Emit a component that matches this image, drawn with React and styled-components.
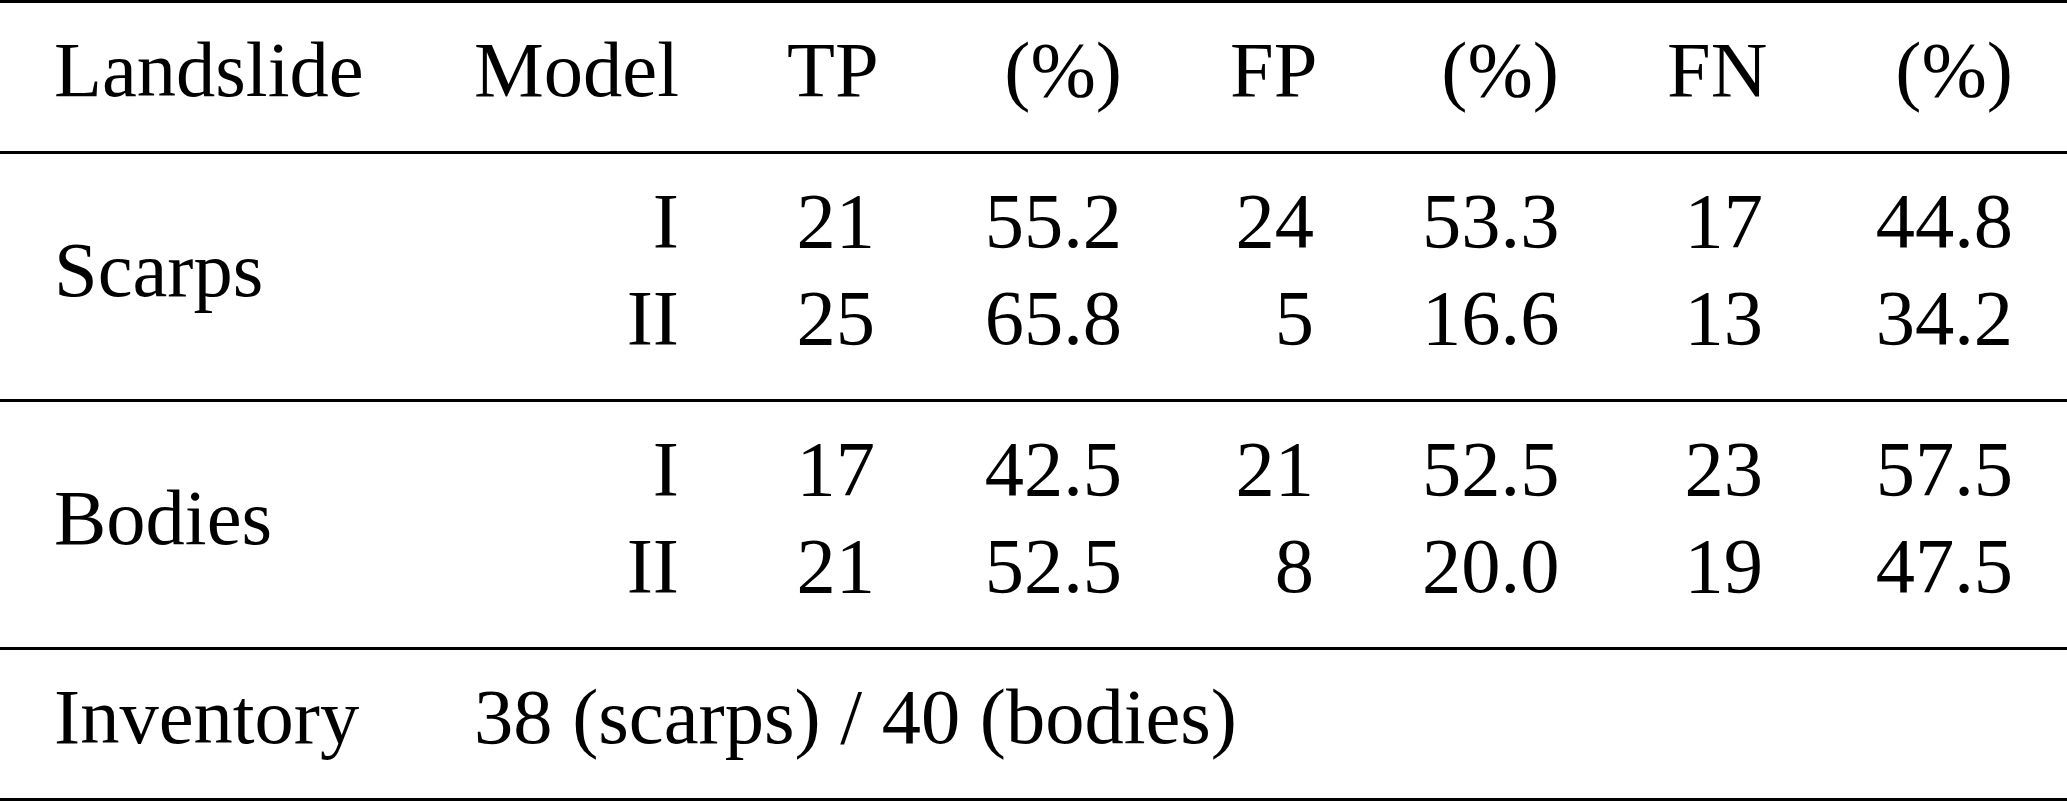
import React from "react";
import styled, { createGlobalStyle } from "styled-components";

const GlobalStyle = createGlobalStyle`
  html, body {
    margin: 0;
    padding: 0;
    background: #ffffff;
  }
  body {
    font-family: "Liberation Serif", "Times New Roman", serif;
    color: #000000;
  }
`;

const columns = ["Landslide", "Model", "TP", "(%)", "FP", "(%)", "FN", "(%)"];

const groups = [
  {
    name: "Scarps",
    rows: [
      ["I", "21", "55.2", "24", "53.3", "17", "44.8"],
      ["II", "25", "65.8", "5", "16.6", "13", "34.2"],
    ],
  },
  {
    name: "Bodies",
    rows: [
      ["I", "17", "42.5", "21", "52.5", "23", "57.5"],
      ["II", "21", "52.5", "8", "20.0", "19", "47.5"],
    ],
  },
];

export default function App() {
  return (
    <>
      <GlobalStyle />
      <Table>
        <Rule />
        <Section>
          <Grid>
            {columns.map((col, i) => (
              <Cell key={i} $align={i === 0 ? "left" : "right"}>
                {col}
              </Cell>
            ))}
          </Grid>
        </Section>
        <Rule />
        {groups.map((group) => (
          <React.Fragment key={group.name}>
            <Section>
              <Grid>
                <Cell $align="left" $rowSpan={2}>
                  {group.name}
                </Cell>
                {group.rows.map((row) =>
                  row.map((value, j) => (
                    <Cell key={group.name + row[0] + j} $align="right">
                      {value}
                    </Cell>
                  ))
                )}
              </Grid>
            </Section>
            <Rule />
          </React.Fragment>
        ))}
        <Section>
          <Grid>
            <Cell $align="left">Inventory</Cell>
            <Cell $align="left" $colSpan={7}>
              38 (scarps) / 40 (bodies)
            </Cell>
          </Grid>
        </Section>
        <Rule />
      </Table>
    </>
  );
}

const Table = styled.div`
  width: 2067px;
  display: flex;
  flex-direction: column;
  font-size: 78.5px;
`;

const Rule = styled.div`
  height: 3px;
  background: #000000;
`;

const Section = styled.div`
  padding: 18px 0 33px;
`;

const Grid = styled.div`
  display: grid;
  grid-template-columns: 420px 313px 196px 247px 192px 245px 204px 250px;
  grid-auto-rows: 97px;
`;

const Cell = styled.div`
  padding: 0 54px;
  line-height: 97px;
  white-space: nowrap;
  text-align: ${(p) => p.$align};
  grid-row: ${(p) => (p.$rowSpan ? `span ${p.$rowSpan}` : "auto")};
  grid-column: ${(p) => (p.$colSpan ? `span ${p.$colSpan}` : "auto")};
  align-self: center;
`;
